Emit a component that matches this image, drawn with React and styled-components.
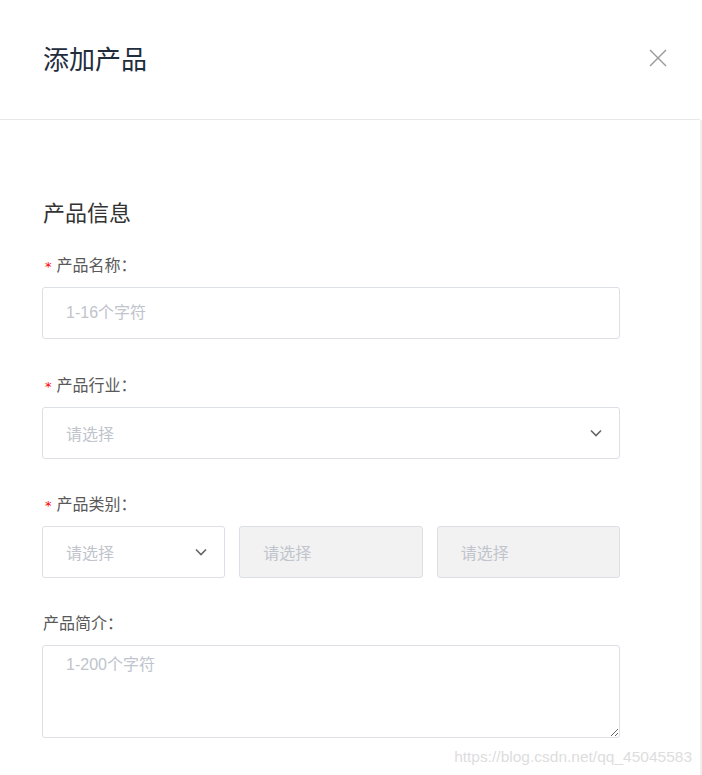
import styled, { createGlobalStyle } from 'styled-components';

const GlobalStyle = createGlobalStyle`
  html, body {
    margin: 0;
    padding: 0;
    background: #fff;
  }
  body {
    font-family: "Liberation Sans", "Noto Sans CJK SC", sans-serif;
  }
  * {
    box-sizing: border-box;
  }
`;

const Chevron = () => (
  <svg width="14" height="14" viewBox="0 0 14 14" fill="none">
    <path d="M2 4.5 L7 9.5 L12 4.5" stroke="#666" strokeWidth="1.6" />
  </svg>
);

const CloseIcon = () => (
  <svg width="18" height="18" viewBox="0 0 18 18" fill="none">
    <path d="M1 1 L17 17 M17 1 L1 17" stroke="#999" strokeWidth="1.4" />
  </svg>
);

const App = () => {
  return (
    <Page>
      <GlobalStyle />
      <Header>
        <Title>添加产品</Title>
        <CloseButton type="button">
          <CloseIcon />
        </CloseButton>
      </Header>
      <Body>
        <SectionTitle>产品信息</SectionTitle>

        <Field gap="33px">
          <Label required>产品名称：</Label>
          <TextInput placeholder="1-16个字符" />
        </Field>

        <Field>
          <Label required>产品行业：</Label>
          <SelectBox>
            <Placeholder>请选择</Placeholder>
            <Chevron />
          </SelectBox>
        </Field>

        <Field>
          <Label required>产品类别：</Label>
          <SelectRow>
            <SelectBox>
              <Placeholder>请选择</Placeholder>
              <Chevron />
            </SelectBox>
            <SelectBox disabled>
              <Placeholder>请选择</Placeholder>
            </SelectBox>
            <SelectBox disabled>
              <Placeholder>请选择</Placeholder>
            </SelectBox>
          </SelectRow>
        </Field>

        <Field gap="0">
          <Label>产品简介：</Label>
          <TextArea placeholder="1-200个字符" />
        </Field>

        <Watermark>https://blog.csdn.net/qq_45045583</Watermark>
      </Body>
    </Page>
  );
};

const Page = styled.div`
  width: 702px;
  min-height: 775px;
  display: flex;
  flex-direction: column;
`;

const Header = styled.header`
  height: 120px;
  display: flex;
  align-items: center;
  justify-content: space-between;
  padding: 0 33px 4px 43px;
  border-bottom: 1px solid #e8e8e8;
  margin-right: 2px;
`;

const Title = styled.h1`
  margin: 0;
  font-size: 26px;
  font-weight: 400;
  color: #1f2d3d;
  font-family: "Noto Sans CJK SC", sans-serif;
`;

const CloseButton = styled.button`
  border: none;
  background: none;
  padding: 0;
  display: flex;
  cursor: pointer;
`;

const Body = styled.main`
  flex: 1;
  display: flex;
  flex-direction: column;
  padding: 76px 80px 0 42px;
  border-right: 2px solid #f0f0f0;
  font-family: "Noto Sans CJK SC", sans-serif;
`;

const SectionTitle = styled.h2`
  margin: 0 0 26px 1px;
  font-size: 22px;
  line-height: 30px;
  font-weight: 400;
  color: #333;
`;

const Field = styled.div`
  display: flex;
  flex-direction: column;
  margin-bottom: ${(p) => p.gap || '32px'};
`;

const Label = styled.label`
  display: flex;
  align-items: center;
  height: 24px;
  margin: 0 0 11px 1px;
  font-size: 16px;
  color: #595959;

  &::before {
    content: ${(p) => (p.required ? "'*'" : 'none')};
    color: #f00;
    font-family: "DejaVu Sans", sans-serif;
    font-size: 13px;
    margin: 5px 5px 0 2px;
  }
`;

const TextInput = styled.input`
  height: 52px;
  width: 100%;
  border: 1px solid #dcdfe6;
  border-radius: 3px;
  padding: 0 23px;
  font-size: 16px;
  font-family: "Liberation Sans", "Noto Sans CJK SC", sans-serif;
  color: #333;
  outline: none;

  &::placeholder {
    color: #c0c4cc;
  }
`;

const SelectRow = styled.div`
  display: grid;
  grid-template-columns: repeat(3, 1fr);
  gap: 14px;
`;

const SelectBox = styled.div`
  height: 52px;
  display: flex;
  align-items: center;
  justify-content: space-between;
  padding: 0 16px 0 23px;
  border: 1px solid #dcdfe6;
  border-radius: 3px;
  background: ${(p) => (p.disabled ? '#f2f2f2' : '#fff')};
`;

const Placeholder = styled.span`
  font-size: 16px;
  color: #c0c4cc;
`;

const TextArea = styled.textarea`
  height: 93px;
  width: 100%;
  border: 1px solid #dcdfe6;
  border-radius: 3px;
  padding: 8px 23px;
  font-size: 16px;
  line-height: 22px;
  font-family: "Liberation Sans", "Noto Sans CJK SC", sans-serif;
  outline: none;
  resize: vertical;

  &::placeholder {
    color: #c0c4cc;
  }
`;

const Watermark = styled.div`
  align-self: flex-end;
  margin: 10px -72px 0 0;
  font-family: "Liberation Sans", sans-serif;
  font-size: 15.5px;
  color: #ddd;
`;

export default App;
